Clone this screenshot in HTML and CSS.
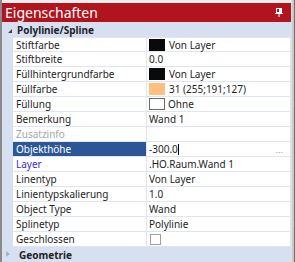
FILE: index.html
```html
<!DOCTYPE html>
<html>
<head>
<meta charset="utf-8">
<link rel="stylesheet" href="styles.css">
</head>
<body>
<div class="window">
  <div class="main">
    <div class="titlebar">
      <span class="title">Eigenschaften</span>
      <svg class="pin" width="8" height="9" viewBox="0 0 8 9">
        <rect x="1.5" y="0.5" width="5" height="4" fill="none" stroke="#fff" stroke-width="1"/>
        <rect x="4" y="1" width="2" height="3" fill="#fff"/>
        <rect x="0" y="5" width="8" height="1" fill="#fff"/>
        <rect x="3.5" y="6" width="1" height="3" fill="#fff"/>
      </svg>
    </div>
    <div class="section">
      <span class="tri open"></span><span class="sec-label">Polylinie/Spline</span>
    </div>
    <div class="grid">
      <div class="row"><div class="name">Stiftfarbe</div><div class="val"><span class="sw black"></span>Von Layer</div></div>
      <div class="row"><div class="name">Stiftbreite</div><div class="val">0.0</div></div>
      <div class="row"><div class="name">Füllhintergrundfarbe</div><div class="val"><span class="sw black"></span>Von Layer</div></div>
      <div class="row"><div class="name">Füllfarbe</div><div class="val"><span class="sw orange"></span>31 (255;191;127)</div></div>
      <div class="row"><div class="name">Füllung</div><div class="val"><span class="sw white"></span>Ohne</div></div>
      <div class="row"><div class="name">Bemerkung</div><div class="val">Wand 1</div></div>
      <div class="row"><div class="name muted">Zusatzinfo</div><div class="val"></div></div>
      <div class="row"><div class="name selected">Objekthöhe</div><div class="val edit">-300.0<span class="caret"></span><span class="dots">...</span></div></div>
      <div class="row"><div class="name link">Layer</div><div class="val">.HO.Raum.Wand 1</div></div>
      <div class="row"><div class="name">Linentyp</div><div class="val">Von Layer</div></div>
      <div class="row"><div class="name">Linientypskalierung</div><div class="val">1.0</div></div>
      <div class="row"><div class="name">Object Type</div><div class="val">Wand</div></div>
      <div class="row"><div class="name">Splinetyp</div><div class="val">Polylinie</div></div>
      <div class="row"><div class="name">Geschlossen</div><div class="val"><span class="check"></span></div></div>
    </div>
    <div class="section bottom">
      <span class="tri closed"></span><span class="sec-label">Geometrie</span>
    </div>
  </div>
  <div class="strip"></div>
</div>
</body>
</html>
```
FILE: styles.css
```css
* { box-sizing: border-box; }
html, body { margin: 0; padding: 0; background: #fff; }
body {
  font-family: "Noto Sans", "Open Sans", sans-serif;
  font-size: 10px;
  color: #1e1e1e;
}
.window {
  width: 295px;
  height: 262px;
  display: flex;
  background: #f0f0f0;
  border-left: 2px solid #8a8a8a;
  overflow: hidden;
}
.main {
  flex: 1;
  display: flex;
  flex-direction: column;
  padding-top: 3px;
  background: #eceef2;
}
.strip {
  width: 4px;
  background: #c9c9c9;
  border-left: 1px solid #e2e2e2;
  border-right: 1px solid #707070;
}
.titlebar {
  height: 19px;
  background: #b2141e;
  color: #fff;
  display: flex;
  align-items: center;
  justify-content: space-between;
  padding: 0 8px 0 3px;
}
.title { font-size: 14px; line-height: 19px; }
.pin { display: block; }
.section {
  height: 15px;
  background: #d6e0f1;
  display: flex;
  align-items: center;
  font-weight: bold;
  color: #222;
  padding-left: 6px;
}
.section.bottom { flex: 1; padding-left: 4px; }
.tri { width: 0; height: 0; margin-right: 5px; }
.tri.open {
  border-left: 4px solid transparent;
  border-bottom: 4px solid #444;
  margin-top: 2px;
}
.tri.closed {
  width: 5px; height: 7px;
  border: none;
  background: none;
  position: relative;
  margin-right: 8px;
}
.tri.closed::before {
  content: "";
  position: absolute;
  left: 0; top: 0;
  border-top: 3.5px solid transparent;
  border-bottom: 3.5px solid transparent;
  border-left: 4px solid #a9b3c3;
}
.grid {
  display: flex;
  flex-direction: column;
  background: #d6e0f1;
  padding-left: 11px;
}
.row {
  height: 15px;
  display: flex;
  border-bottom: 1px solid #dfe6f1;
  background: #fff;
}
.row:first-child { border-top: 1px solid #dfe6f1; }
.name {
  width: 134px;
  padding-left: 3px;
  border-right: 1px solid #dfe6f1;
  line-height: 14px;
  white-space: nowrap;
}
.name.muted { color: #a6a6a6; }
.name.link { color: #3a2cd8; }
.name.selected { background: #2b5797; color: #fff; }
.val {
  flex: 1;
  display: flex;
  align-items: center;
  padding-left: 2px;
  white-space: nowrap;
  border-right: 1px solid #dfe6f1;
}
.val.edit { position: relative; }
.caret {
  width: 1px; height: 11px; background: #000;
}
.dots {
  position: absolute;
  right: 7px;
  top: 1px;
  color: #9a9a9a;
  font-size: 9px;
}
.sw {
  width: 16px;
  height: 12px;
  margin-right: 4px;
  flex: none;
}
.sw.black { background: #0a0a0a; }
.sw.orange { background: #ffbf7f; }
.sw.white { background: #fff; border: 1px solid #6a6a6a; margin-right: 3px; }
.check {
  width: 11px; height: 11px;
  border: 1px solid #a0a0a0;
  margin-left: 1px;
  background: #fff;
}
```
